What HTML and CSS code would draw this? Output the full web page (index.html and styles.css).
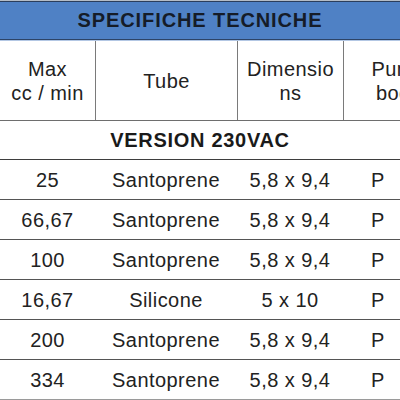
FILE: index.html
```html
<!DOCTYPE html>
<html>
<head>
<meta charset="utf-8">
<link rel="stylesheet" href="styles.css">
</head>
<body>
<div class="sheet">
  <div class="title">SPECIFICHE TECNICHE</div>
  <div class="row head">
    <div class="cell">Max<br>cc / min</div>
    <div class="cell sep">Tube</div>
    <div class="cell sep">Dimensio<br>ns</div>
    <div class="cell sep">Pump<br>body</div>
  </div>
  <div class="version">VERSION 230VAC</div>
  <div class="row data">
    <div class="cell">25</div><div class="cell">Santoprene</div><div class="cell">5,8 x 9,4</div><div class="cell body">P</div>
  </div>
  <div class="row data">
    <div class="cell">66,67</div><div class="cell">Santoprene</div><div class="cell">5,8 x 9,4</div><div class="cell body">P</div>
  </div>
  <div class="row data">
    <div class="cell">100</div><div class="cell">Santoprene</div><div class="cell">5,8 x 9,4</div><div class="cell body">P</div>
  </div>
  <div class="row data">
    <div class="cell">16,67</div><div class="cell">Silicone</div><div class="cell">5 x 10</div><div class="cell body">P</div>
  </div>
  <div class="row data">
    <div class="cell">200</div><div class="cell">Santoprene</div><div class="cell">5,8 x 9,4</div><div class="cell body">P</div>
  </div>
  <div class="row data last">
    <div class="cell">334</div><div class="cell">Santoprene</div><div class="cell">5,8 x 9,4</div><div class="cell body">P</div>
  </div>
</div>
</body>
</html>
```
FILE: styles.css
```css
html, body {
  margin: 0;
  padding: 0;
  background: #ffffff;
}
body {
  width: 400px;
  height: 400px;
  overflow: hidden;
  font-family: "Liberation Sans", Arial, sans-serif;
  color: #222222;
}
.sheet {
  width: 400px;
  overflow: hidden;
  border-top: 1px solid #b4bcc6;
}
.title {
  height: 37px;
  background: #4f81c5;
  border-top: 1px solid #2b3e5c;
  border-bottom: 1px solid #2d4467;
  box-shadow: 0 1px 0 #b3c7e4;
  margin-bottom: 1px;
  display: flex;
  align-items: center;
  justify-content: center;
  font-weight: bold;
  font-size: 20px;
  letter-spacing: 0.9px;
  color: #151c28;
}
.row {
  display: grid;
  grid-template-columns: 95px 142px 106px 110px;
  width: 453px;
  font-size: 20px;
  letter-spacing: 0.45px;
}
.cell {
  display: flex;
  align-items: center;
  justify-content: center;
  text-align: center;
  box-sizing: border-box;
}
.cell.body {
  justify-content: flex-start;
  padding-left: 28px;
}
.head {
  height: 79px;
  border-bottom: 1px solid #6e6e6e;
  line-height: 24px;
}
.head .sep {
  border-left: 1px solid #7a7a7a;
}
.version {
  height: 38px;
  border-bottom: 1px solid #3e3e3e;
  display: flex;
  align-items: center;
  justify-content: center;
  font-weight: bold;
  font-size: 20px;
  letter-spacing: 0.7px;
  color: #1a1a1a;
}
.data {
  height: 40px;
  border-bottom: 1px solid #555555;
  padding-top: 2px;
  box-sizing: border-box;
}
.data.last {
  height: 42px;
  border-bottom: 3px solid #9a9a9a;
}
```
